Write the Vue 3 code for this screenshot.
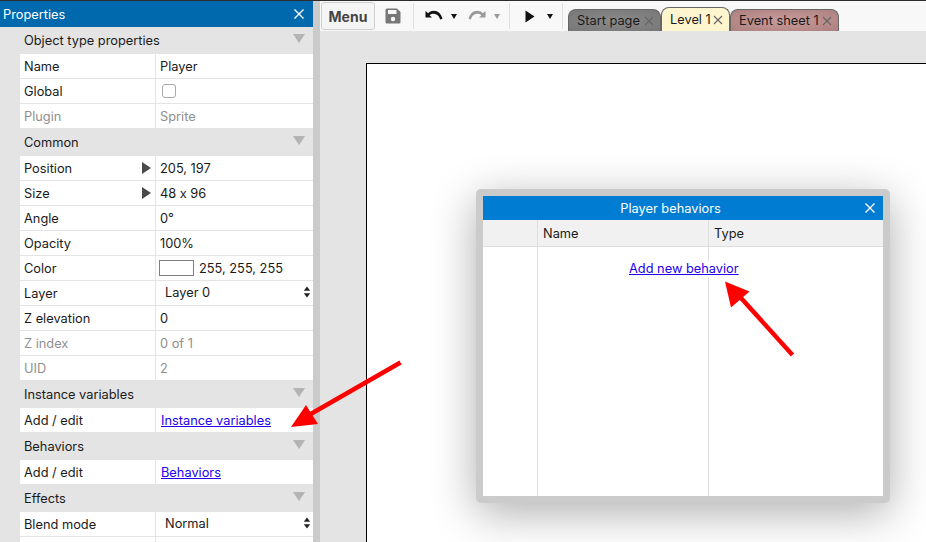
<template>
  <div class="app">
    <div class="main">
      <aside class="panel">
        <div class="panel-title">
          <span>Properties</span>
          <svg class="close" width="12" height="12" viewBox="0 0 12 12"><path d="M1.500 1.500l9 9M10.500 1.500l-9 9" stroke="#fff" stroke-width="1.400" fill="none" /></svg>
        </div>
        <template v-for="(row, i) in rows" :key="i">
          <div v-if="row.section" class="section" :class="{ first: i === 0 }">
            <span>{{ row.section }}</span>
            <i class="section-arrow"></i>
          </div>
          <div v-else class="row" :class="{ last: row.last, off: row.off }">
            <div class="cell-name">
              <span>{{ row.name }}</span>
              <i v-if="row.expand" class="expand"></i>
            </div>
            <div class="cell-value">
              <input v-if="row.check" type="checkbox" class="check" />
              <template v-else-if="row.color">
                <i class="swatch"></i><span>{{ row.value }}</span>
              </template>
              <div v-else-if="row.select" class="select">
                <span>{{ row.value }}</span>
                <svg width="8" height="12" viewBox="0 0 8 12"><path d="M4 0.500L7.200 4.800H0.800zM4 11.500L0.800 7.200H7.200z" fill="#222" /></svg>
              </div>
              <a v-else-if="row.link" href="#" class="link" @click.prevent>{{ row.value }}</a>
              <span v-else>{{ row.value }}</span>
            </div>
          </div>
        </template>
      </aside>
      <div class="splitter"></div>
      <div class="workspace">
        <div class="toolbar">
          <button class="menu-btn">Menu</button>
          <svg class="tool save" width="16" height="16" viewBox="0 0 16 16">
            <path d="M2 0.500h10l3.500 3.500v10a1.500 1.500 0 0 1-1.500 1.500H2A1.500 1.500 0 0 1 .5 14V2A1.500 1.500 0 0 1 2 .5z" fill="#777" />
            <rect x="3" y="2" width="8.500" height="4" fill="#f8f8f8" />
            <circle cx="8" cy="11" r="2.200" fill="#f8f8f8" />
          </svg>
          <i class="sep sep-1"></i>
          <svg class="tool undo" width="18" height="12" viewBox="0 0 18 12"><path d="M0.500 1v6.500H7L4.600 5.200C6 4 7.500 3.600 9 3.700c2.800 .2 5 2 6.200 5.800l2.300-.7C16 3.500 13 .8 9 .8 7 .8 4.800 1.500 3.100 3.300z" fill="#111" /></svg>
          <i class="caret caret-undo"></i>
          <svg class="tool redo" width="18" height="12" viewBox="0 0 18 12"><path d="M17.500 1v6.500H11l2.400-2.300C12 4 10.500 3.600 9 3.700c-2.800.2-5 2-6.200 5.800L.5 8.800C2 3.500 5 .8 9 .8c2 0 4.200.7 5.900 2.500z" fill="#999" /></svg>
          <i class="caret caret-redo"></i>
          <i class="sep sep-2"></i>
          <svg class="tool play" width="10" height="13" viewBox="0 0 10 13"><path d="M0.500 0.500L9.500 6.500L0.500 12.500z" fill="#111" /></svg>
          <i class="caret caret-play"></i>
          <i class="sep sep-3"></i>
          <div class="tabs">
            <div v-for="tab in tabs" :key="tab.label" class="tab" :class="tab.cls">
              <span>{{ tab.label }}</span>
              <svg width="10" height="10" viewBox="0 0 10 10"><path d="M1 1l8 8M9 1l-8 8" stroke="#666" stroke-width="1.100" fill="none" /></svg>
            </div>
          </div>
        </div>
        <div class="canvas">
          <div class="layout"></div>
          <div class="dialog">
            <div class="dialog-inner">
              <div class="dialog-title">
                <span>Player behaviors</span>
                <svg class="close" width="12" height="12" viewBox="0 0 12 12"><path d="M1.500 1.500l9 9M10.500 1.500l-9 9" stroke="#fff" stroke-width="1.400" fill="none" /></svg>
              </div>
              <div class="dialog-head">
                <div></div>
                <div>Name</div>
                <div>Type</div>
              </div>
              <div class="dialog-body">
                <div></div>
                <div></div>
                <div></div>
                <a href="#" class="link add-link" @click.prevent>Add new behavior</a>
              </div>
            </div>
          </div>
        </div>
      </div>
    </div>
    <svg class="arrows" width="926" height="542" viewBox="0 0 926 542">
      <path d="M400.500 362.500L309 415" stroke="#fe0000" stroke-width="4.500" fill="none" />
      <path d="M291 427L306 405L318 424z" fill="#fe0000" />
      <path d="M792.500 355L741 298" stroke="#fe0000" stroke-width="4.500" fill="none" />
      <path d="M725 281.500L749.500 291.500L731 307.500z" fill="#fe0000" />
    </svg>
  </div>
</template>

<script setup>
const rows = [
  { section: 'Object type properties' },
  { name: 'Name', value: 'Player' },
  { name: 'Global', check: true },
  { name: 'Plugin', value: 'Sprite', off: true, last: true },
  { section: 'Common' },
  { name: 'Position', value: '205, 197', expand: true },
  { name: 'Size', value: '48 x 96', expand: true },
  { name: 'Angle', value: '0°' },
  { name: 'Opacity', value: '100%' },
  { name: 'Color', value: '255, 255, 255', color: true },
  { name: 'Layer', value: 'Layer 0', select: true },
  { name: 'Z elevation', value: '0' },
  { name: 'Z index', value: '0 of 1', off: true },
  { name: 'UID', value: '2', off: true, last: true },
  { section: 'Instance variables' },
  { name: 'Add / edit', value: 'Instance variables', link: true, last: true },
  { section: 'Behaviors' },
  { name: 'Add / edit', value: 'Behaviors', link: true, last: true },
  { section: 'Effects' },
  { name: 'Blend mode', value: 'Normal', select: true },
  { name: '', value: '' }
]

const tabs = [
  { label: 'Start page', cls: 'tab-start' },
  { label: 'Level 1', cls: 'tab-level' },
  { label: 'Event sheet 1', cls: 'tab-event' }
]
</script>

<style>
html, body {
  margin: 0;
  overflow: hidden;
}
</style>

<style scoped>
.app {
  position: relative;
  width: 926px;
  height: 542px;
  overflow: hidden;
  border-top: 1px solid #2b2b2b;
  box-sizing: border-box;
  font-family: Inter, "Liberation Sans", sans-serif;
  font-size: 12.8px;
  font-feature-settings: "calt" 0;
  color: #1a1a1a;
  background: #e4e4e4;
}

.main {
  display: flex;
  height: 541px;
}

.panel {
  width: 313px;
  flex: none;
  overflow: hidden;
  background: #e4e4e4;
}

.panel-title {
  display: flex;
  align-items: center;
  justify-content: space-between;
  height: 26px;
  padding: 0 8px 0 3px;
  background: #0069ae;
  color: #fff;
}

.section {
  display: flex;
  align-items: center;
  justify-content: space-between;
  height: 28px;
  padding: 0 8px 0 24px;
  background: #e4e4e4;
}

.section.first {
  height: 27px;
}

.section-arrow {
  width: 0;
  height: 0;
  margin-bottom: 4px;
  border-left: 6px solid transparent;
  border-right: 6px solid transparent;
  border-top: 9px solid #b4b4b4;
}

.row {
  display: grid;
  grid-template-columns: 136px 1fr;
  height: 25px;
  margin-left: 20px;
  box-sizing: border-box;
  background: #fff;
  border-bottom: 1px solid #e4e4e4;
}

.row.last {
  height: 24px;
  border-bottom: 0;
}

.row.off {
  color: #8f8f8f;
}

.cell-name {
  display: flex;
  align-items: center;
  justify-content: space-between;
  padding: 0 4px 0 4px;
  border-right: 1px solid #e4e4e4;
}

.cell-value {
  display: flex;
  align-items: center;
  padding-left: 4px;
  min-width: 0;
}

.expand {
  width: 0;
  height: 0;
  border-top: 6px solid transparent;
  border-bottom: 6px solid transparent;
  border-left: 9px solid #4a4a4a;
}

.check {
  width: 14px;
  height: 14px;
  margin: 0 0 0 2px;
  appearance: none;
  border: 1px solid #a8a8a8;
  border-radius: 3px;
  background: #fff;
}

.swatch {
  width: 35px;
  height: 16px;
  margin: 0 5px 0 -1px;
  box-sizing: border-box;
  border: 1px solid #808080;
  background: #fff;
}

.select {
  display: flex;
  flex: 1;
  align-items: center;
  justify-content: space-between;
  padding: 0 2px 2px 5px;
}

.link {
  margin-left: 1px;
  color: #2200ee;
  text-decoration: underline;
}

.splitter {
  width: 7px;
  flex: none;
  background: #cbcbcb;
}

.workspace {
  display: flex;
  flex: 1;
  flex-direction: column;
  min-width: 0;
}

.toolbar {
  display: flex;
  align-items: flex-end;
  flex: none;
  height: 30px;
  padding-left: 1px;
  box-sizing: border-box;
  background: #f8f8f8;
}

.menu-btn {
  align-self: flex-start;
  width: 54px;
  height: 28px;
  margin-top: 1px;
  padding: 0;
  border: 1px solid #cfcfcf;
  border-radius: 3px;
  background: #f5f5f5;
  font-family: inherit;
  font-size: 14px;
  font-weight: 700;
  color: #444;
}

.tool {
  align-self: center;
  flex: none;
}

.save {
  margin-left: 10px;
}

.sep {
  align-self: flex-start;
  flex: none;
  width: 1px;
  height: 26px;
  margin-top: 2px;
  background: #e0e0e0;
}

.sep-1 {
  margin-left: 12px;
}

.undo {
  margin-left: 11px;
}

.caret {
  align-self: center;
  flex: none;
  width: 0;
  height: 0;
  border-left: 3px solid transparent;
  border-right: 3px solid transparent;
  border-top: 5px solid #111;
}

.caret-undo {
  margin-left: 8px;
}

.redo {
  margin-left: 11px;
}

.caret-redo {
  margin-left: 8px;
  border-top-color: #999;
}

.sep-2 {
  margin-left: 9px;
}

.play {
  margin-left: 15px;
}

.caret-play {
  margin-left: 12px;
}

.sep-3 {
  margin-left: 9px;
}

.tabs {
  display: flex;
  align-items: flex-end;
  margin-left: 5px;
}

.tab {
  display: flex;
  flex: none;
  align-items: center;
  justify-content: space-between;
  height: 22px;
  padding: 0 6px 0 8px;
  box-sizing: border-box;
  border: 1px solid #666;
  border-bottom: 0;
  border-radius: 8px 8px 0 0;
  white-space: nowrap;
}

.tab-start {
  width: 93px;
  background: radial-gradient(ellipse at center, #8a8a8a, #777);
}

.tab-level {
  width: 69px;
  height: 24px;
  background: #fff6cf;
}

.tab-event {
  width: 109px;
  background: radial-gradient(ellipse at center, #c99b9b, #ad8080);
}

.canvas {
  position: relative;
  flex: 1;
  padding: 32px 0 0 46px;
  overflow: hidden;
}

.layout {
  height: 100%;
  border-top: 1px solid #000;
  border-left: 1px solid #000;
  background: #fff;
}

.dialog {
  position: absolute;
  top: 158px;
  left: 156px;
  width: 400px;
  height: 300px;
  padding: 7px;
  border-radius: 5px;
  background: #cbcbcb;
  box-shadow: 0 10px 45px rgba(0, 0, 0, 0.32);
}

.dialog-inner {
  display: flex;
  flex-direction: column;
  height: 100%;
  background: #fff;
}

.dialog-title {
  position: relative;
  flex: none;
  height: 24px;
  padding-right: 25px;
  line-height: 26px;
  text-align: center;
  background: #007dd3;
  color: #fff;
}

.dialog-title .close {
  position: absolute;
  top: 6px;
  right: 7px;
}

.dialog-head,
.dialog-body {
  display: grid;
  grid-template-columns: 54px 171px 1fr;
}

.dialog-head {
  flex: none;
  height: 27px;
  line-height: 28px;
  box-sizing: border-box;
  border-bottom: 1px solid #dedede;
  background: #f1f1f1;
}

.dialog-head div + div,
.dialog-body div + div {
  padding-left: 5px;
  border-left: 1px solid #dedede;
}

.dialog-body {
  position: relative;
  flex: 1;
}

.add-link {
  position: absolute;
  top: 14px;
  left: 146px;
  margin: 0;
  padding: 0 0 1px;
  background: #fff;
}

.arrows {
  position: absolute;
  top: -1px;
  left: 0;
  pointer-events: none;
}
</style>
